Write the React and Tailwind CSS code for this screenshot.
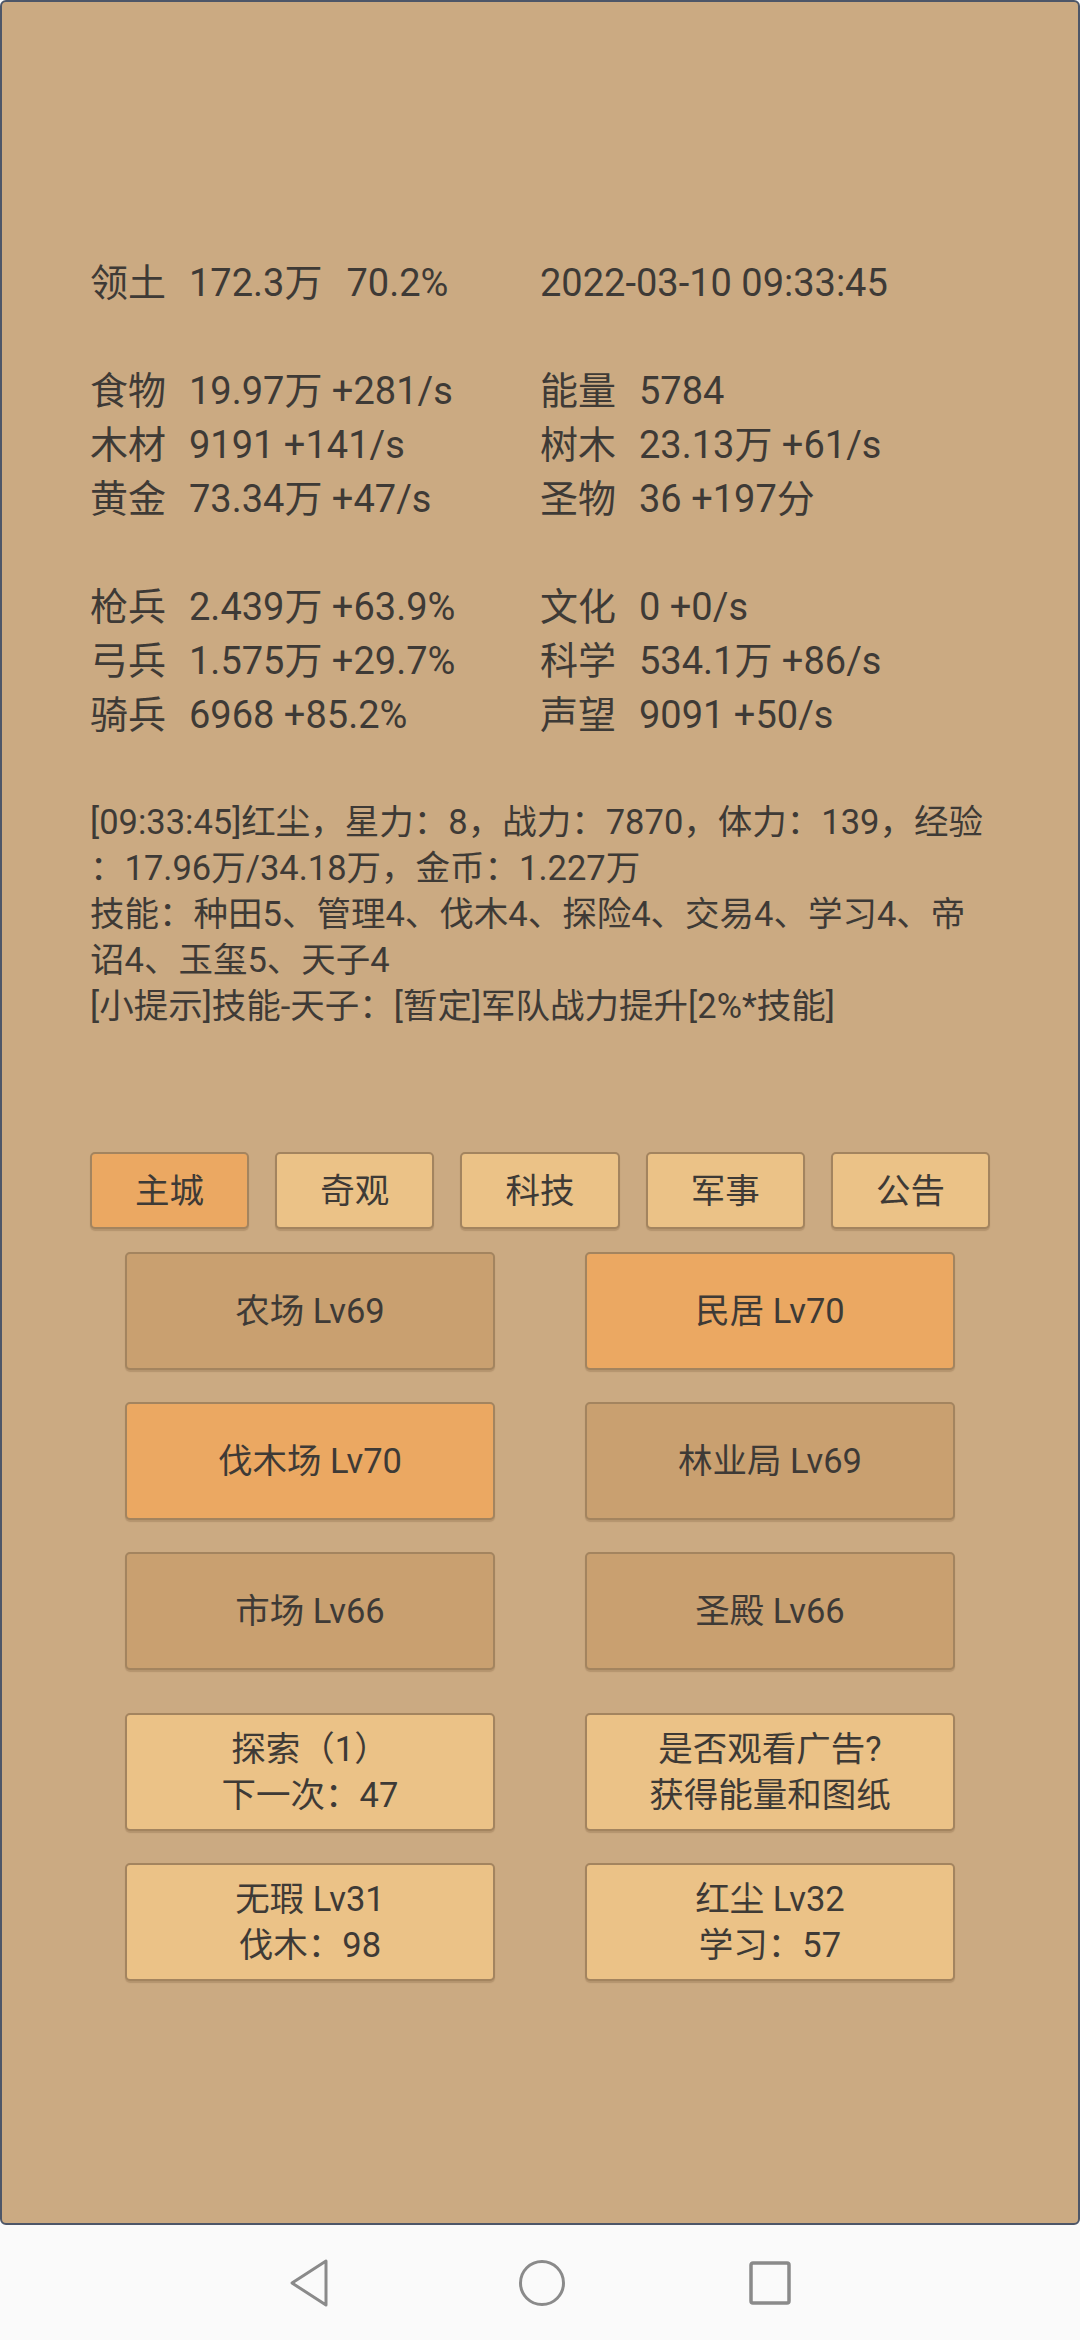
import React from 'react';

const stats = [
    [['领土', '172.3万', '70.2%'], ['2022-03-10 09:33:45']],
    null,
    [['食物', '19.97万 +281/s'], ['能量', '5784']],
    [['木材', '9191 +141/s'], ['树木', '23.13万 +61/s']],
    [['黄金', '73.34万 +47/s'], ['圣物', '36 +197分']],
    null,
    [['枪兵', '2.439万 +63.9%'], ['文化', '0 +0/s']],
    [['弓兵', '1.575万 +29.7%'], ['科学', '534.1万 +86/s']],
    [['骑兵', '6968 +85.2%'], ['声望', '9091 +50/s']],
];

const logLines = [
    '[09:33:45]红尘，星力：8，战力：7870，体力：139，经验',
    '：17.96万/34.18万，金币：1.227万',
    '技能：种田5、管理4、伐木4、探险4、交易4、学习4、帝',
    '诏4、玉玺5、天子4',
    '[小提示]技能-天子：[暂定]军队战力提升[2%*技能]',
];

const tabs = ['主城', '奇观', '科技', '军事', '公告'];

const btnBase = 'border-2 border-[#a3845f] rounded-[5px] shadow-[0_2px_1px_rgba(80,50,20,0.18)] flex flex-col items-center justify-center text-[34.5px] leading-[46px]';

function StatCell({ cell }) {
    if (cell.length === 1) return <div className="whitespace-nowrap">{cell[0]}</div>;
    return (
        <div className="flex whitespace-nowrap">
            <span className="w-[99px] shrink-0">{cell[0]}</span>
            <span>{cell[1]}</span>
            {cell[2] && <span className="ml-[24px]">{cell[2]}</span>}
        </div>
    );
}

function Building({ lines, color }) {
    return (
        <div className={`${btnBase} h-[118px] ${color}`}>
            {lines.map((l, i) => <div key={i}>{l}</div>)}
        </div>
    );
}

export default function App() {
    return (
        <div className="w-[1080px] h-[2340px] flex flex-col bg-[#fafafa] text-[#3e3a36] font-['Roboto','Noto_Sans_CJK_SC',sans-serif]">
            <div className="h-[2225px] shrink-0 bg-[#cbaa82] border-2 border-[#4d5668] rounded-[6px] pt-[254px] px-[88px]">
                {/* 资源 */}
                <div className="text-[38px] leading-[54px]">
                    {stats.map((row, i) => row ? (
                        <div key={i} className="grid grid-cols-2">
                            <StatCell cell={row[0]} />
                            <StatCell cell={row[1]} />
                        </div>
                    ) : <div key={i} className="h-[54px]" />)}
                </div>

                <div className="mt-[57px] text-[34.5px] leading-[46px]">
                    {logLines.map((l, i) => <div key={i} className="whitespace-nowrap">{l}</div>)}
                </div>

                <div className="mt-[123px] flex gap-[26px]">
                    {tabs.map((t, i) => (
                        <div key={t} className={`${btnBase} flex-1 h-[77px] ${i === 0 ? 'bg-[#eba862]' : 'bg-[#ebc287]'}`}>{t}</div>
                    ))}
                </div>

                <div className="mt-[23px] px-[35px]">
                    <div className="grid grid-cols-2 gap-x-[90px] gap-y-[32px]">
                        <Building lines={['农场 Lv69']} color="bg-[#c9a070]" />
                        <Building lines={['民居 Lv70']} color="bg-[#eba862]" />
                        <Building lines={['伐木场 Lv70']} color="bg-[#eba862]" />
                        <Building lines={['林业局 Lv69']} color="bg-[#c9a070]" />
                        <Building lines={['市场 Lv66']} color="bg-[#c9a070]" />
                        <Building lines={['圣殿 Lv66']} color="bg-[#c9a070]" />
                    </div>
                    <div className="mt-[43px] grid grid-cols-2 gap-x-[90px] gap-y-[32px]">
                        <Building lines={['探索（1）', '下一次：47']} color="bg-[#ebc287]" />
                        <Building lines={['是否观看广告?', '获得能量和图纸']} color="bg-[#ebc287]" />
                        <Building lines={['无瑕 Lv31', '伐木：98']} color="bg-[#ebc287]" />
                        <Building lines={['红尘 Lv32', '学习：57']} color="bg-[#ebc287]" />
                    </div>
                </div>
            </div>

            {/* 导航栏 */}
            <div className="flex-1 flex items-center justify-center">
                <svg width="40" height="48" viewBox="0 0 40 48" fill="none" stroke="#8a8a8a" strokeWidth="3" strokeLinejoin="round">
                    <path d="M3 24 L37 2 L37 46 Z" />
                </svg>
                <svg className="ml-[189px]" width="48" height="48" viewBox="0 0 48 48" fill="none" stroke="#8a8a8a" strokeWidth="3">
                    <circle cx="24" cy="24" r="21.5" />
                </svg>
                <svg className="ml-[182px]" width="44" height="44" viewBox="0 0 44 44" fill="none" stroke="#8a8a8a" strokeWidth="3.5">
                    <rect x="3" y="2" width="38" height="40" rx="2" />
                </svg>
            </div>
        </div>
    );
}
